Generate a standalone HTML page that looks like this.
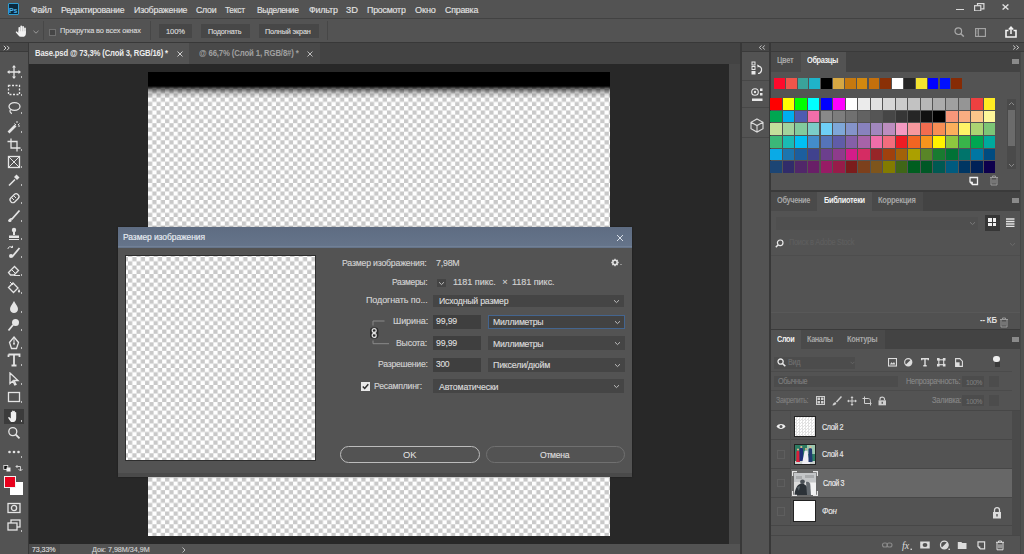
<!DOCTYPE html>
<html><head><meta charset="utf-8">
<style>
*{margin:0;padding:0;box-sizing:border-box}
html,body{width:1024px;height:554px;overflow:hidden;background:#535353;font-family:"Liberation Sans",sans-serif;color:#d6d6d6}
body{position:relative}
.a{position:absolute}
.t{position:absolute;white-space:pre;line-height:1;-webkit-text-stroke-width:0.15px}
.chk{background:repeating-conic-gradient(#c9c9c9 0 25%,#ffffff 0 50%) 0 0/8.533px 8.533px}
</style></head><body>
<div class="a" style="left:0px;top:0px;width:1024px;height:18px;background:#535353;"></div>
<div class="a" style="left:0px;top:18px;width:1024px;height:1px;background:#424242;"></div>
<div class="a" style="left:0px;top:19px;width:1024px;height:23px;background:#535353;"></div>
<div class="a" style="left:0px;top:42px;width:1024px;height:1px;background:#383838;"></div>
<div class="a" style="left:0px;top:43px;width:28px;height:511px;background:#535353;"></div>
<div class="a" style="left:0px;top:43px;width:28px;height:8px;background:#474747;"></div>
<div class="a" style="left:0px;top:51px;width:28px;height:1px;background:#3a3a3a;"></div>
<div class="a" style="left:28px;top:43px;width:1px;height:511px;background:#383838;"></div>
<div class="a" style="left:29px;top:43px;width:711px;height:21px;background:#434343;"></div>
<div class="a" style="left:29px;top:43px;width:160px;height:21px;background:#535353;"></div>
<div class="a" style="left:189px;top:43px;width:131px;height:21px;background:#494949;"></div>
<div class="a" style="left:29px;top:64px;width:700px;height:480px;background:#282828;"></div>
<div class="a" style="left:729px;top:64px;width:11px;height:480px;background:#484848;"></div>
<div class="a" style="left:29px;top:544px;width:711px;height:10px;background:#535353;"></div>
<div class="a" style="left:29px;top:544px;width:31px;height:10px;background:#4a4a4a;"></div>
<div class="a" style="left:740px;top:43px;width:2px;height:511px;background:#383838;"></div>
<div class="a" style="left:742px;top:43px;width:27px;height:511px;background:#535353;"></div>
<div class="a" style="left:742px;top:43px;width:27px;height:8px;background:#474747;"></div>
<div class="a" style="left:742px;top:51px;width:27px;height:1px;background:#3a3a3a;"></div>
<div class="a" style="left:769px;top:43px;width:2px;height:511px;background:#383838;"></div>
<div class="a" style="left:771px;top:43px;width:253px;height:511px;background:#535353;"></div>
<div class="a" style="left:771px;top:43px;width:253px;height:8px;background:#474747;"></div>
<div class="a" style="left:771px;top:51px;width:253px;height:1px;background:#3a3a3a;"></div>
<div class="a" style="left:1020px;top:52px;width:4px;height:502px;background:#505050;"></div>
<div class="a" style="left:1020px;top:52px;width:1px;height:502px;background:#474747;"></div>
<svg class="a" style="left:1012px;top:45px" width="8" height="5" viewBox="0 0 8 5"><path d="M1.2 0.5L3.4 2.5L1.2 4.5M4.5 0.5L6.7 2.5L4.5 4.5" fill="none" stroke="#dcdcdc" stroke-width="0.9"/></svg>
<svg class="a" style="left:148px;top:72px" width="462" height="464"><defs><pattern id="pc" width="8.5333" height="8.5333" patternUnits="userSpaceOnUse"><rect width="8.5333" height="8.5333" fill="#fff"/><rect x="4.2667" width="4.2667" height="4.2667" fill="#c9c9c9"/><rect y="4.2667" width="4.2667" height="4.2667" fill="#c9c9c9"/></pattern></defs><rect width="462" height="464" fill="url(#pc)"/></svg>
<div class="a" style="left:148px;top:72px;width:462px;height:26px;background:linear-gradient(#000 0,#000 14px,rgba(0,0,0,.55) 17px,rgba(0,0,0,.2) 21px,rgba(0,0,0,0) 26px)"></div>
<div class="a" style="left:118px;top:227px;width:514px;height:250px;background:#535353;box-shadow:0 0 2px rgba(0,0,0,.35)"></div>
<div class="a" style="left:118px;top:227px;width:514px;height:21px;background:linear-gradient(#5e6c82,#66758b);"></div>
<div class="a" style="left:118px;top:246px;width:514px;height:1px;background:#718096;"></div>
<div class="t" style="left:123.06px;top:233.32px;font-size:8.6px;color:#e8edf3;letter-spacing:-0.058px;transform:scaleX(0.9823);transform-origin:0 0">Размер изображения</div>
<svg class="a" style="left:616px;top:234px" width="8" height="8" viewBox="0 0 8 8"><path d="M1 1L7 7M7 1L1 7" stroke="#dfe5ec" stroke-width="0.95"/></svg>
<div class="a" style="left:125px;top:255px;width:191px;height:205.5px;background:#2e2e2e;"></div>
<svg class="a" style="left:126px;top:256px" width="189" height="203.5"><rect width="189" height="204" fill="url(#pc2)"/><defs><pattern id="pc2" width="8.5333" height="8.5333" patternUnits="userSpaceOnUse" x="2" y="1"><rect width="8.5333" height="8.5333" fill="#fff"/><rect x="4.2667" width="4.2667" height="4.2667" fill="#c9c9c9"/><rect y="4.2667" width="4.2667" height="4.2667" fill="#c9c9c9"/></pattern></defs></svg>
<div class="a" style="left:118px;top:473px;width:514px;height:4px;background:#4a4a4a;"></div>
<div class="t" style="left:342.45px;top:258.53px;font-size:9.3px;color:#d2d2d2;letter-spacing:-0.207px;transform:scaleX(0.9378);transform-origin:0 0">Размер изображения:</div>
<div class="t" style="left:435.55px;top:258.53px;font-size:9.3px;color:#d2d2d2;letter-spacing:-0.209px;transform:scaleX(0.9488);transform-origin:0 0">7,98M</div>
<svg class="a" style="left:611px;top:258px" width="12" height="9" viewBox="0 0 12 9"><circle cx="4" cy="4.5" r="2.2" fill="none" stroke="#e0e0e0" stroke-width="1.6"/><g stroke="#e0e0e0" stroke-width="1.3"><path d="M4 0.8V2M4 7V8.2M0.3 4.5H1.5M6.5 4.5H7.7M1.4 1.9L2.2 2.7M5.8 6.3L6.6 7.1M1.4 7.1L2.2 6.3M5.8 2.7L6.6 1.9"/></g><path d="M9 6L11 6L10 7Z" fill="#cfcfcf"/></svg>
<div class="t" style="left:391.66px;top:278.33px;font-size:9.3px;color:#d2d2d2;letter-spacing:-0.323px;transform:scaleX(0.9115);transform-origin:0 0">Размеры:</div>
<div class="a" style="left:437px;top:279px;width:9px;height:8px;background:#444;"></div>
<svg class="a" style="left:438px;top:281px" width="7" height="5" viewBox="0 0 7 5"><path d="M1 1.2L3.5 3.6L6 1.2" fill="none" stroke="#bdbdbd" stroke-width="1"/></svg>
<div class="t" style="left:453.24px;top:278.33px;font-size:9.3px;color:#d2d2d2;letter-spacing:-0.065px;transform:scaleX(0.9797);transform-origin:0 0">1181 пикс.</div>
<div class="t" style="left:502.13px;top:278.33px;font-size:9.3px;color:#d2d2d2;letter-spacing:0.000px">×</div>
<div class="t" style="left:512.34px;top:278.33px;font-size:9.3px;color:#d2d2d2;letter-spacing:-0.069px;transform:scaleX(0.9782);transform-origin:0 0">1181 пикс.</div>
<div class="t" style="left:366.04px;top:296.43px;font-size:9.3px;color:#d2d2d2;letter-spacing:-0.103px;transform:scaleX(0.9658);transform-origin:0 0">Подогнать по...</div>
<div class="a" style="left:433px;top:294.5px;width:191px;height:12.5px;background:#454545;"></div>
<svg class="a" style="left:613px;top:298.75px" width="7" height="5" viewBox="0 0 7 5"><path d="M1 1.2L3.5 3.6L6 1.2" fill="none" stroke="#bdbdbd" stroke-width="1"/></svg>
<div class="t" style="left:438.65px;top:297.23px;font-size:9.3px;color:#dcdcdc;letter-spacing:-0.215px;transform:scaleX(0.9385);transform-origin:0 0">Исходный размер</div>
<div class="t" style="left:392.64px;top:317.43px;font-size:9.3px;color:#d2d2d2;letter-spacing:-0.121px;transform:scaleX(0.9696);transform-origin:0 0">Ширина:</div>
<div class="a" style="left:433px;top:315px;width:48px;height:13.5px;background:#3f3f3f;"></div>
<div class="t" style="left:435.65px;top:317.43px;font-size:9.3px;color:#dcdcdc;letter-spacing:-0.201px;transform:scaleX(0.9450);transform-origin:0 0">99,99</div>
<div class="a" style="left:487.6px;top:315px;width:137px;height:14px;background:#424242;border:1px solid #44658f;"></div>
<svg class="a" style="left:613.6px;top:320.0px" width="7" height="5" viewBox="0 0 7 5"><path d="M1 1.2L3.5 3.6L6 1.2" fill="none" stroke="#bdbdbd" stroke-width="1"/></svg>
<div class="t" style="left:493.25px;top:318.23px;font-size:9.3px;color:#dcdcdc;letter-spacing:-0.258px;transform:scaleX(0.9349);transform-origin:0 0">Миллиметры</div>
<div class="t" style="left:396.35px;top:338.93px;font-size:9.3px;color:#d2d2d2;letter-spacing:-0.224px;transform:scaleX(0.9382);transform-origin:0 0">Высота:</div>
<div class="a" style="left:433px;top:336.4px;width:48px;height:14px;background:#3f3f3f;"></div>
<div class="t" style="left:435.65px;top:338.93px;font-size:9.3px;color:#dcdcdc;letter-spacing:-0.201px;transform:scaleX(0.9450);transform-origin:0 0">99,99</div>
<div class="a" style="left:487.6px;top:336.4px;width:137px;height:14px;background:#454545;"></div>
<svg class="a" style="left:613.6px;top:341.4px" width="7" height="5" viewBox="0 0 7 5"><path d="M1 1.2L3.5 3.6L6 1.2" fill="none" stroke="#bdbdbd" stroke-width="1"/></svg>
<div class="t" style="left:493.25px;top:339.73px;font-size:9.3px;color:#dcdcdc;letter-spacing:-0.258px;transform:scaleX(0.9349);transform-origin:0 0">Миллиметры</div>
<div class="t" style="left:377.65px;top:360.43px;font-size:9.3px;color:#d2d2d2;letter-spacing:-0.253px;transform:scaleX(0.9287);transform-origin:0 0">Разрешение:</div>
<div class="a" style="left:433px;top:358px;width:48px;height:14px;background:#3f3f3f;"></div>
<div class="t" style="left:435.66px;top:360.43px;font-size:9.3px;color:#dcdcdc;letter-spacing:-0.392px;transform:scaleX(0.9171);transform-origin:0 0">300</div>
<div class="a" style="left:487.6px;top:358px;width:137px;height:14px;background:#454545;"></div>
<svg class="a" style="left:613.6px;top:363.0px" width="7" height="5" viewBox="0 0 7 5"><path d="M1 1.2L3.5 3.6L6 1.2" fill="none" stroke="#bdbdbd" stroke-width="1"/></svg>
<div class="t" style="left:493.25px;top:361.23px;font-size:9.3px;color:#dcdcdc;letter-spacing:-0.200px;transform:scaleX(0.9451);transform-origin:0 0">Пиксели/дюйм</div>
<svg class="a" style="left:368px;top:318px" width="24" height="30" viewBox="0 0 24 30"><path d="M16.5 3H5V7.5M5 22.5V25.7H21" fill="none" stroke="#8a8a8a" stroke-width="1"/><rect x="2" y="9.5" width="8.4" height="11" rx="3" fill="#2c2c2c"/><circle cx="6.2" cy="12.6" r="2" fill="none" stroke="#e2e2e2" stroke-width="1.2"/><circle cx="6.2" cy="17.4" r="2" fill="none" stroke="#e2e2e2" stroke-width="1.2"/><path d="M6.2 13.5V16.5" stroke="#e2e2e2" stroke-width="1"/></svg>
<div class="a" style="left:361px;top:382px;width:9px;height:9px;background:#e8e8e8;"></div>
<svg class="a" style="left:361px;top:382px" width="9" height="9" viewBox="0 0 9 9"><path d="M1.8 4.5L3.7 6.5L7.3 2.3" fill="none" stroke="#2e2e2e" stroke-width="1.5"/></svg>
<div class="t" style="left:374.45px;top:381.93px;font-size:9.3px;color:#d2d2d2;letter-spacing:-0.231px;transform:scaleX(0.9321);transform-origin:0 0">Ресамплинг:</div>
<div class="a" style="left:433px;top:379.4px;width:191px;height:13.6px;background:#454545;"></div>
<svg class="a" style="left:613px;top:384.2px" width="7" height="5" viewBox="0 0 7 5"><path d="M1 1.2L3.5 3.6L6 1.2" fill="none" stroke="#bdbdbd" stroke-width="1"/></svg>
<div class="t" style="left:438.65px;top:382.73px;font-size:9.3px;color:#dcdcdc;letter-spacing:-0.181px;transform:scaleX(0.9476);transform-origin:0 0">Автоматически</div>
<div class="a" style="left:340px;top:445.5px;width:139.5px;height:17.5px;border:1.2px solid #bcbcbc;border-radius:9px"></div>
<div class="t" style="left:402.63px;top:451.13px;font-size:9.3px;color:#e6e6e6;letter-spacing:0.048px;transform:scaleX(1.0056);transform-origin:0 0;-webkit-text-stroke-width:0">OK</div>
<div class="a" style="left:486px;top:445.5px;width:139px;height:17.5px;border:1px solid #707070;border-radius:9px"></div>
<div class="t" style="left:540.16px;top:451.13px;font-size:9.3px;color:#dedede;letter-spacing:-0.304px;transform:scaleX(0.9271);transform-origin:0 0">Отмена</div>
<div class="a" style="left:7.6px;top:3px;width:11.6px;height:12.2px;background:#0a2a3e;border:1px solid #2f9ccf;border-radius:1px"></div>
<div class="t" style="left:9.12px;top:6.51px;font-size:7.2px;color:#4bb4f0;letter-spacing:-0.146px;transform:scaleX(0.9734);transform-origin:0 0;font-weight:700;-webkit-text-stroke-width:0">Ps</div>
<div class="t" style="left:31.25px;top:6.03px;font-size:9.3px;color:#e2e2e2;letter-spacing:-0.254px;transform:scaleX(0.9470);transform-origin:0 0">Файл</div>
<div class="t" style="left:61.05px;top:6.03px;font-size:9.3px;color:#e2e2e2;letter-spacing:-0.224px;transform:scaleX(0.9352);transform-origin:0 0">Редактирование</div>
<div class="t" style="left:133.95px;top:6.03px;font-size:9.3px;color:#e2e2e2;letter-spacing:-0.201px;transform:scaleX(0.9462);transform-origin:0 0">Изображение</div>
<div class="t" style="left:196.15px;top:6.03px;font-size:9.3px;color:#e2e2e2;letter-spacing:-0.274px;transform:scaleX(0.9420);transform-origin:0 0">Слои</div>
<div class="t" style="left:225.16px;top:6.03px;font-size:9.3px;color:#e2e2e2;letter-spacing:-0.335px;transform:scaleX(0.9066);transform-origin:0 0">Текст</div>
<div class="t" style="left:256.66px;top:6.03px;font-size:9.3px;color:#e2e2e2;letter-spacing:-0.365px;transform:scaleX(0.9042);transform-origin:0 0">Выделение</div>
<div class="t" style="left:308.65px;top:6.03px;font-size:9.3px;color:#e2e2e2;letter-spacing:-0.190px;transform:scaleX(0.9520);transform-origin:0 0">Фильтр</div>
<div class="t" style="left:345.62px;top:6.03px;font-size:9.3px;color:#e2e2e2;letter-spacing:0.067px;transform:scaleX(1.0088);transform-origin:0 0">3D</div>
<div class="t" style="left:367.05px;top:6.03px;font-size:9.3px;color:#e2e2e2;letter-spacing:-0.206px;transform:scaleX(0.9465);transform-origin:0 0">Просмотр</div>
<div class="t" style="left:415.23px;top:6.03px;font-size:9.3px;color:#e2e2e2;letter-spacing:-0.087px;transform:scaleX(0.9812);transform-origin:0 0">Окно</div>
<div class="t" style="left:445.05px;top:6.03px;font-size:9.3px;color:#e2e2e2;letter-spacing:-0.208px;transform:scaleX(0.9459);transform-origin:0 0">Справка</div>
<div class="a" style="left:956px;top:8.5px;width:8px;height:1.6px;background:#d8d8d8;"></div>
<svg class="a" style="left:974px;top:2.5px" width="10.5" height="8.5" viewBox="0 0 10.5 8.5"><path d="M3.5 2.5V0.6H9.9V5.8H7.2" fill="none" stroke="#dadada" stroke-width="1.2"/><rect x="0.6" y="2.7" width="6.2" height="5.2" fill="none" stroke="#dadada" stroke-width="1.2"/></svg>
<svg class="a" style="left:1001.5px;top:3.8px" width="7" height="6" viewBox="0 0 7 6"><path d="M0.6 0.4L6.4 5.6M6.4 0.4L0.6 5.6" stroke="#dedede" stroke-width="1.3"/></svg>
<svg class="a" style="left:15.3px;top:24.6px" width="12" height="12" viewBox="0 0 12 12"><g stroke="#f2f2f2" stroke-width="1.7" stroke-linecap="round"><path d="M4.3 7V2.8M6.2 6.5V1.3M8.1 6.5V1.8M10 7V3.3"/></g><path d="M3.4 6.2H10.9V8.4C10.9 10.6 9.6 11.8 7.6 11.8H5.8C4.8 11.8 4.1 11.4 3.5 10.6L0.9 7.4C0.5 6.8 1.2 6 1.9 6.6L3.4 7.9Z" fill="#f2f2f2"/></svg>
<svg class="a" style="left:33px;top:30px" width="6" height="4" viewBox="0 0 6 4"><path d="M0.5 0.8L3 3.2L5.5 0.8" fill="none" stroke="#9a9a9a" stroke-width="1"/></svg>
<div class="a" style="left:43px;top:21px;width:1px;height:19px;background:#474747;"></div>
<div class="a" style="left:49.3px;top:28.5px;width:7px;height:7px;border:1px solid #707070;background:#454545"></div>
<div class="t" style="left:59.51px;top:27.48px;font-size:7.7px;color:#d8d8d8;letter-spacing:-0.115px;transform:scaleX(0.9550);transform-origin:0 0">Прокрутка во всех окнах</div>
<div class="a" style="left:150px;top:21px;width:1px;height:19px;background:#474747;"></div>
<div class="a" style="left:159.3px;top:23.6px;width:32.4px;height:14.4px;background:#474747;"></div>
<div class="t" style="left:165.70px;top:27.78px;font-size:7.7px;color:#dadada;letter-spacing:-0.081px;transform:scaleX(0.9807);transform-origin:0 0">100%</div>
<div class="a" style="left:201px;top:23.6px;width:49.2px;height:14.4px;background:#474747;"></div>
<div class="t" style="left:208.01px;top:27.78px;font-size:7.7px;color:#dadada;letter-spacing:-0.181px;transform:scaleX(0.9383);transform-origin:0 0">Подогнать</div>
<div class="a" style="left:258.5px;top:23.6px;width:60.7px;height:14.4px;background:#474747;"></div>
<div class="t" style="left:265.31px;top:27.78px;font-size:7.7px;color:#dadada;letter-spacing:-0.165px;transform:scaleX(0.9433);transform-origin:0 0">Полный экран</div>
<div class="a" style="left:326.5px;top:21px;width:1px;height:19px;background:#474747;"></div>
<svg class="a" style="left:954px;top:27px" width="12" height="10" viewBox="0 0 12 10"><circle cx="4.3" cy="4.2" r="3.3" fill="none" stroke="#a8a8a8" stroke-width="1.2"/><path d="M6.8 6.7L9.8 9.6" stroke="#a8a8a8" stroke-width="1.4"/></svg>
<svg class="a" style="left:975px;top:28px" width="11" height="9" viewBox="0 0 11 9"><rect x="0.6" y="0.6" width="9.8" height="7.8" fill="none" stroke="#a8a8a8" stroke-width="1.1"/><path d="M3.3 1V8" stroke="#a8a8a8" stroke-width="1"/><path d="M1.5 3H2.5M1.5 5H2.5" stroke="#a8a8a8" stroke-width="0.8"/></svg>
<svg class="a" style="left:1005px;top:25.5px" width="12" height="12" viewBox="0 0 12 12"><path d="M3.5 4.5H1V11H11V4.5H8.5" fill="none" stroke="#f4f4f4" stroke-width="1.6"/><path d="M6 8V1.5M3.8 3.5L6 1.2L8.2 3.5" fill="none" stroke="#f4f4f4" stroke-width="1.5"/></svg>
<svg class="a" style="left:3px;top:45px" width="8" height="6" viewBox="0 0 8 6"><path d="M0.8 0.8L3 3L0.8 5.2M4 0.8L6.2 3L4 5.2" fill="none" stroke="#cfcfcf" stroke-width="1"/></svg>
<svg class="a" style="left:7px;top:65px" width="16" height="14" viewBox="0 0 16 14"><path d="M7 1V13M1 7H13" fill="none" stroke="#e4e4e4" stroke-width="1.3"/><path d="M7 0L9 2.5H5ZM7 14L9 11.5H5ZM0 7L2.5 5V9ZM14 7L11.5 5V9Z" fill="#e4e4e4"/></svg>
<div class="a" style="left:20.5px;top:76px;width:1.5px;height:1.5px;background:#bdbdbd;"></div>
<svg class="a" style="left:7px;top:83px" width="16" height="14" viewBox="0 0 16 14"><rect x="1.5" y="2.5" width="11" height="9" fill="none" stroke="#e4e4e4" stroke-width="1.3" stroke-dasharray="2 1.5"/></svg>
<div class="a" style="left:20.5px;top:94px;width:1.5px;height:1.5px;background:#bdbdbd;"></div>
<svg class="a" style="left:7px;top:101px" width="16" height="14" viewBox="0 0 16 14"><ellipse cx="7.5" cy="5.5" rx="5.5" ry="3.8" fill="none" stroke="#e4e4e4" stroke-width="1.3"/><path d="M3.5 8.5C2.5 10 3 12 5 12.5" fill="none" stroke="#e4e4e4" stroke-width="1.3"/></svg>
<div class="a" style="left:20.5px;top:112px;width:1.5px;height:1.5px;background:#bdbdbd;"></div>
<svg class="a" style="left:7px;top:120px" width="16" height="14" viewBox="0 0 16 14"><path d="M1.5 12.5L8.5 5.5" stroke="#e4e4e4" stroke-width="2.6"/><path d="M10 1V3M12.5 3.5L11 5M13 6H11M7.5 3.5L9 5" stroke="#e4e4e4" stroke-width="1"/></svg>
<div class="a" style="left:20.5px;top:131px;width:1.5px;height:1.5px;background:#bdbdbd;"></div>
<svg class="a" style="left:7px;top:138px" width="16" height="14" viewBox="0 0 16 14"><path d="M4 0.5V10H13.5M0.5 3.5H10V13.5" fill="none" stroke="#e4e4e4" stroke-width="1.3"/></svg>
<div class="a" style="left:20.5px;top:149px;width:1.5px;height:1.5px;background:#bdbdbd;"></div>
<svg class="a" style="left:7px;top:155px" width="16" height="14" viewBox="0 0 16 14"><rect x="1.5" y="1.5" width="11" height="11" fill="none" stroke="#e4e4e4" stroke-width="1.3"/><path d="M1.5 1.5L12.5 12.5M12.5 1.5L1.5 12.5" stroke="#e4e4e4" stroke-width="1"/></svg>
<div class="a" style="left:20.5px;top:166px;width:1.5px;height:1.5px;background:#bdbdbd;"></div>
<svg class="a" style="left:7px;top:173px" width="16" height="14" viewBox="0 0 16 14"><path d="M2 12.5L8 6.5" stroke="#e4e4e4" stroke-width="1.6"/><path d="M9.5 1.5L12.5 4.5L10 7L7 4Z" fill="#e4e4e4"/></svg>
<div class="a" style="left:20.5px;top:184px;width:1.5px;height:1.5px;background:#bdbdbd;"></div>
<svg class="a" style="left:7px;top:191px" width="16" height="14" viewBox="0 0 16 14"><rect x="2.5" y="4.5" width="10" height="5.5" rx="2.5" transform="rotate(-45 7.5 7.25)" fill="none" stroke="#e4e4e4" stroke-width="1.3"/><path d="M5 7L7 9M7 5L9 7" stroke="#e4e4e4" stroke-width="1"/></svg>
<div class="a" style="left:20.5px;top:202px;width:1.5px;height:1.5px;background:#bdbdbd;"></div>
<svg class="a" style="left:7px;top:209px" width="16" height="14" viewBox="0 0 16 14"><path d="M2 12.5C2.5 10.5 3.5 9.5 5 10L12.5 1.5" stroke="#e4e4e4" stroke-width="1.8" fill="none"/><circle cx="3" cy="11.5" r="1.6" fill="#e4e4e4"/></svg>
<div class="a" style="left:20.5px;top:220px;width:1.5px;height:1.5px;background:#bdbdbd;"></div>
<svg class="a" style="left:7px;top:227px" width="16" height="14" viewBox="0 0 16 14"><circle cx="7" cy="3" r="2.2" fill="#e4e4e4"/><path d="M6 5H8V8H6Z" fill="#e4e4e4"/><path d="M2 8.5H12V11H2Z" fill="#e4e4e4"/><path d="M2 12.5H12" stroke="#e4e4e4" stroke-width="1"/></svg>
<div class="a" style="left:20.5px;top:238px;width:1.5px;height:1.5px;background:#bdbdbd;"></div>
<svg class="a" style="left:7px;top:245px" width="16" height="14" viewBox="0 0 16 14"><path d="M5 12L12.5 3" stroke="#e4e4e4" stroke-width="1.8"/><circle cx="4" cy="11" r="2" fill="#e4e4e4"/><path d="M1 4C1 1.5 4 1 5.5 2.5M5.5 2.5V0.8M5.5 2.5H3.8" stroke="#e4e4e4" stroke-width="1" fill="none"/></svg>
<div class="a" style="left:20.5px;top:256px;width:1.5px;height:1.5px;background:#bdbdbd;"></div>
<svg class="a" style="left:7px;top:263px" width="16" height="14" viewBox="0 0 16 14"><path d="M1.5 9.5L7.5 3.5L11.5 7.5L7 12H3.5Z" fill="none" stroke="#e4e4e4" stroke-width="1.3"/><path d="M4.5 6.5L8.5 10.5" stroke="#e4e4e4" stroke-width="1"/><path d="M7 12.5H13" stroke="#e4e4e4" stroke-width="1"/></svg>
<div class="a" style="left:20.5px;top:274px;width:1.5px;height:1.5px;background:#bdbdbd;"></div>
<svg class="a" style="left:7px;top:281px" width="16" height="14" viewBox="0 0 16 14"><path d="M1.5 6.5L6 2L11 7L6.5 11.5Z" fill="none" stroke="#e4e4e4" stroke-width="1.3"/><path d="M12 8C13.5 10 13.5 11.5 12 11.5C10.5 11.5 10.5 10 12 8Z" fill="#e4e4e4"/><path d="M3 1L6 4" stroke="#e4e4e4" stroke-width="1"/></svg>
<div class="a" style="left:20.5px;top:292px;width:1.5px;height:1.5px;background:#bdbdbd;"></div>
<svg class="a" style="left:7px;top:300px" width="16" height="14" viewBox="0 0 16 14"><path d="M7 1C9 4.5 11 6.5 11 9C11 11.5 9 13 7 13C5 13 3 11.5 3 9C3 6.5 5 4.5 7 1Z" fill="#e4e4e4"/></svg>
<div class="a" style="left:20.5px;top:311px;width:1.5px;height:1.5px;background:#bdbdbd;"></div>
<svg class="a" style="left:7px;top:318px" width="16" height="14" viewBox="0 0 16 14"><circle cx="8.5" cy="4.5" r="3.5" fill="#e4e4e4"/><path d="M6 7L1.5 12.5" stroke="#e4e4e4" stroke-width="1.8"/></svg>
<div class="a" style="left:20.5px;top:329px;width:1.5px;height:1.5px;background:#bdbdbd;"></div>
<svg class="a" style="left:7px;top:336px" width="16" height="14" viewBox="0 0 16 14"><path d="M7 1L11.5 6.5L9.5 12.5H4.5L2.5 6.5Z" fill="none" stroke="#e4e4e4" stroke-width="1.3"/><path d="M7 1V7" stroke="#e4e4e4" stroke-width="1"/><circle cx="7" cy="7.8" r="1" fill="#e4e4e4"/></svg>
<div class="a" style="left:20.5px;top:347px;width:1.5px;height:1.5px;background:#bdbdbd;"></div>
<svg class="a" style="left:7px;top:353px" width="16" height="14" viewBox="0 0 16 14"><path d="M1.5 1.5H12.5V4M1.5 1.5V4M7 1.5V12.5M4.5 12.5H9.5" stroke="#e4e4e4" stroke-width="1.8" fill="none"/></svg>
<div class="a" style="left:20.5px;top:364px;width:1.5px;height:1.5px;background:#bdbdbd;"></div>
<svg class="a" style="left:7px;top:372px" width="16" height="14" viewBox="0 0 16 14"><path d="M3 1L11 8.5H7L9 12.5L7.8 13L5.8 9L3 11.5Z" fill="none" stroke="#e4e4e4" stroke-width="1.3"/></svg>
<div class="a" style="left:20.5px;top:383px;width:1.5px;height:1.5px;background:#bdbdbd;"></div>
<svg class="a" style="left:7px;top:390px" width="16" height="14" viewBox="0 0 16 14"><rect x="1.5" y="2.5" width="11" height="9" fill="none" stroke="#e4e4e4" stroke-width="1.3"/></svg>
<div class="a" style="left:20.5px;top:401px;width:1.5px;height:1.5px;background:#bdbdbd;"></div>
<div class="a" style="left:4px;top:409px;width:20px;height:14.5px;background:#3b3b3b;"></div>
<svg class="a" style="left:7px;top:409px" width="16" height="14" viewBox="0 0 16 14"><path d="M4 13C2.8 11.5 1.3 9.6 1.2 8.6C1.1 7.9 2 7.7 2.6 8.4L3.8 9.6V3.5C3.8 2.6 5.1 2.6 5.1 3.5V6.8V2.2C5.1 1.2 6.5 1.2 6.5 2.2V6.8V2.5C6.5 1.6 7.9 1.6 7.9 2.5V7V3.6C7.9 2.7 9.2 2.7 9.2 3.6V9C9.2 11.4 7.9 13 6.4 13Z" fill="#f0f0f0"/></svg>
<div class="a" style="left:20.5px;top:420px;width:1.5px;height:1.5px;background:#bdbdbd;"></div>
<svg class="a" style="left:7px;top:426px" width="16" height="14" viewBox="0 0 16 14"><circle cx="5.8" cy="5.6" r="4" fill="none" stroke="#e4e4e4" stroke-width="1.3"/><path d="M8.8 8.6L12.5 12.3" stroke="#e4e4e4" stroke-width="1.8"/></svg>
<svg class="a" style="left:7px;top:445px" width="16" height="14" viewBox="0 0 16 14"><circle cx="2.5" cy="7" r="1.3" fill="#e4e4e4"/><circle cx="7" cy="7" r="1.3" fill="#e4e4e4"/><circle cx="11.5" cy="7" r="1.3" fill="#e4e4e4"/></svg>
<div class="a" style="left:20.5px;top:456px;width:1.5px;height:1.5px;background:#bdbdbd;"></div>
<svg class="a" style="left:3px;top:465px" width="20" height="7" viewBox="0 0 20 7"><rect x="0.8" y="0.5" width="4" height="4" fill="#111" stroke="#eee" stroke-width="0.8"/><rect x="3.5" y="2.5" width="4" height="4" fill="#eee"/><path d="M13 1.5H17.5V5.5M15.5 4L17.5 6L19.5 4M14.5 0L13 1.5L14.5 3" fill="none" stroke="#ddd" stroke-width="0.9"/></svg>
<div class="a" style="left:10px;top:482px;width:13px;height:12.5px;background:#ffffff;"></div>
<div class="a" style="left:3.8px;top:475.8px;width:12.6px;height:12.4px;background:#e8001c;border:1px solid #f0f0f0"></div>
<svg class="a" style="left:7px;top:501.5px" width="16" height="14" viewBox="0 0 16 14"><rect x="1" y="1.5" width="12" height="9" fill="none" stroke="#e4e4e4" stroke-width="1.3"/><circle cx="7" cy="6" r="2.6" fill="none" stroke="#e4e4e4" stroke-width="1.3"/></svg>
<svg class="a" style="left:7px;top:519px" width="16" height="14" viewBox="0 0 16 14"><rect x="4" y="1" width="9" height="7" fill="none" stroke="#e4e4e4" stroke-width="1.3"/><rect x="1" y="4" width="9" height="7" fill="#535353" stroke="#e4e4e4" stroke-width="1.3"/></svg>
<div class="a" style="left:20.5px;top:530px;width:1.5px;height:1.5px;background:#bdbdbd;"></div>
<div class="t" style="left:35.09px;top:50.46px;font-size:8.2px;color:#ececec;letter-spacing:-0.168px;transform:scaleX(0.9394);transform-origin:0 0;font-weight:700;-webkit-text-stroke-width:0">Base.psd @ 73,3% (Слой 3, RGB/16) *</div>
<svg class="a" style="left:177px;top:51px" width="6" height="6" viewBox="0 0 6 6"><path d="M0.5 0.5L5.5 5.5M5.5 0.5L0.5 5.5" stroke="#cfcfcf" stroke-width="1"/></svg>
<div class="t" style="left:199.19px;top:50.46px;font-size:8.2px;color:#a0a0a0;letter-spacing:-0.142px;transform:scaleX(0.9492);transform-origin:0 0;font-weight:700;-webkit-text-stroke-width:0">@ 66,7% (Слой 1, RGB/8#) *</div>
<svg class="a" style="left:307px;top:51px" width="6" height="6" viewBox="0 0 6 6"><path d="M0.5 0.5L5.5 5.5M5.5 0.5L0.5 5.5" stroke="#bdbdbd" stroke-width="1"/></svg>
<div class="t" style="left:31.91px;top:546.04px;font-size:7.4px;color:#dcdcdc;letter-spacing:-0.115px;transform:scaleX(0.9642);transform-origin:0 0">73,33%</div>
<div class="t" style="left:91.71px;top:546.04px;font-size:7.4px;color:#d0d0d0;letter-spacing:-0.052px;transform:scaleX(0.9801);transform-origin:0 0">Док: 7,98M/34,9M</div>
<svg class="a" style="left:181.5px;top:546.5px" width="4" height="6" viewBox="0 0 4 6"><path d="M0.5 0.5L3 3L0.5 5.5" fill="none" stroke="#bdbdbd" stroke-width="1"/></svg>
<svg class="a" style="left:758px;top:45px" width="8" height="5" viewBox="0 0 8 5"><path d="M3.5 0.5L1.3 2.5L3.5 4.5M6.8 0.5L4.6 2.5L6.8 4.5" fill="none" stroke="#cfcfcf" stroke-width="0.9"/></svg>
<div class="a" style="left:742px;top:80px;width:27px;height:1px;background:#474747;"></div>
<div class="a" style="left:742px;top:107px;width:27px;height:1px;background:#474747;"></div>
<div class="a" style="left:742px;top:137px;width:27px;height:1px;background:#474747;"></div>
<svg class="a" style="left:751px;top:61px" width="12" height="14" viewBox="0 0 12 14"><rect x="1" y="1" width="3" height="3" fill="none" stroke="#e8e8e8" stroke-width="1"/><rect x="1" y="5.5" width="3" height="3" fill="none" stroke="#e8e8e8" stroke-width="1"/><rect x="0.5" y="10" width="4" height="3.5" fill="#e8e8e8"/><path d="M7 5.5C9.5 5 11 7 10.5 9.5C10 11.5 8.5 12.5 7 12.5" fill="none" stroke="#e8e8e8" stroke-width="1.2"/><path d="M6 3.5L8.3 4.5L6.8 6.8Z" fill="#e8e8e8"/></svg>
<svg class="a" style="left:751px;top:87px" width="12" height="16" viewBox="0 0 12 16"><circle cx="4" cy="5" r="3.3" fill="none" stroke="#e8e8e8" stroke-width="1.1"/><circle cx="4" cy="5" r="1.2" fill="#e8e8e8"/><rect x="9" y="1.5" width="2.5" height="2.5" fill="#e8e8e8"/><rect x="9" y="6" width="2.5" height="2.5" fill="#e8e8e8"/><rect x="1" y="11.5" width="10.5" height="2.5" fill="#e8e8e8"/></svg>
<svg class="a" style="left:750px;top:118px" width="14" height="15" viewBox="0 0 14 15"><path d="M7 1L13 4.3V10.7L7 14L1 10.7V4.3Z M1 4.3L7 7.6L13 4.3M7 7.6V14" fill="none" stroke="#dcdcdc" stroke-width="1.1"/></svg>
<div class="a" style="left:771px;top:52px;width:249px;height:20px;background:#434343;"></div>
<div class="a" style="left:771px;top:52px;width:30px;height:20px;background:#4a4a4a;"></div>
<div class="a" style="left:801px;top:52px;width:44.6px;height:20px;background:#535353;"></div>
<div class="t" style="left:776.50px;top:56.66px;font-size:8.2px;color:#a6a6a6;letter-spacing:-0.358px;transform:scaleX(0.9096);transform-origin:0 0;font-weight:700;-webkit-text-stroke-width:0">Цвет</div>
<div class="t" style="left:807.41px;top:56.66px;font-size:8.2px;color:#f2f2f2;letter-spacing:-0.386px;transform:scaleX(0.8988);transform-origin:0 0;font-weight:700;-webkit-text-stroke-width:0">Образцы</div>
<div class="a" style="left:1012px;top:58.5px;width:7.3px;height:5.5px;background:#8a8a8a"></div>
<div class="a" style="left:774.0px;top:77.9px;width:10.7px;height:10.9px;background:#ff0a2c;"></div>
<div class="a" style="left:785.83px;top:77.9px;width:10.7px;height:10.9px;background:#ef554a;"></div>
<div class="a" style="left:797.66px;top:77.9px;width:10.7px;height:10.9px;background:#3aa39a;"></div>
<div class="a" style="left:809.49px;top:77.9px;width:10.7px;height:10.9px;background:#1fb3c9;"></div>
<div class="a" style="left:821.32px;top:77.9px;width:10.7px;height:10.9px;background:#000000;"></div>
<div class="a" style="left:833.15px;top:77.9px;width:10.7px;height:10.9px;background:#d6a743;"></div>
<div class="a" style="left:844.98px;top:77.9px;width:10.7px;height:10.9px;background:#c6790f;"></div>
<div class="a" style="left:856.81px;top:77.9px;width:10.7px;height:10.9px;background:#d2880f;"></div>
<div class="a" style="left:868.64px;top:77.9px;width:10.7px;height:10.9px;background:#c5700c;"></div>
<div class="a" style="left:880.47px;top:77.9px;width:10.7px;height:10.9px;background:#8a3006;"></div>
<div class="a" style="left:892.3px;top:77.9px;width:10.7px;height:10.9px;background:#ffffff;"></div>
<div class="a" style="left:904.13px;top:77.9px;width:10.7px;height:10.9px;background:#262626;"></div>
<div class="a" style="left:915.96px;top:77.9px;width:10.7px;height:10.9px;background:#f3e230;"></div>
<div class="a" style="left:927.79px;top:77.9px;width:10.7px;height:10.9px;background:#0000ff;"></div>
<div class="a" style="left:939.62px;top:77.9px;width:10.7px;height:10.9px;background:#0010ff;"></div>
<div class="a" style="left:951.45px;top:77.9px;width:10.7px;height:10.9px;background:#862b05;"></div>
<div class="a" style="left:770.3px;top:98.3px;width:11.5px;height:11.6px;background:#FF0000;"></div>
<div class="a" style="left:782.85px;top:98.3px;width:11.5px;height:11.6px;background:#FFFF00;"></div>
<div class="a" style="left:795.4px;top:98.3px;width:11.5px;height:11.6px;background:#00FF00;"></div>
<div class="a" style="left:807.95px;top:98.3px;width:11.5px;height:11.6px;background:#00FFFF;"></div>
<div class="a" style="left:820.5px;top:98.3px;width:11.5px;height:11.6px;background:#0000FF;"></div>
<div class="a" style="left:833.05px;top:98.3px;width:11.5px;height:11.6px;background:#FF00FF;"></div>
<div class="a" style="left:845.6px;top:98.3px;width:11.5px;height:11.6px;background:#FFFFFF;"></div>
<div class="a" style="left:858.15px;top:98.3px;width:11.5px;height:11.6px;background:#EBEBEB;"></div>
<div class="a" style="left:870.7px;top:98.3px;width:11.5px;height:11.6px;background:#E1E1E1;"></div>
<div class="a" style="left:883.25px;top:98.3px;width:11.5px;height:11.6px;background:#D7D7D7;"></div>
<div class="a" style="left:895.8px;top:98.3px;width:11.5px;height:11.6px;background:#CCCCCC;"></div>
<div class="a" style="left:908.35px;top:98.3px;width:11.5px;height:11.6px;background:#C2C2C2;"></div>
<div class="a" style="left:920.9px;top:98.3px;width:11.5px;height:11.6px;background:#B7B7B7;"></div>
<div class="a" style="left:933.45px;top:98.3px;width:11.5px;height:11.6px;background:#ACACAC;"></div>
<div class="a" style="left:946.0px;top:98.3px;width:11.5px;height:11.6px;background:#A0A0A0;"></div>
<div class="a" style="left:958.55px;top:98.3px;width:11.5px;height:11.6px;background:#959595;"></div>
<div class="a" style="left:971.1px;top:98.3px;width:11.5px;height:11.6px;background:#ED4040;"></div>
<div class="a" style="left:983.65px;top:98.3px;width:11.5px;height:11.6px;background:#FFEC22;"></div>
<div class="a" style="left:770.3px;top:110.85px;width:11.5px;height:11.6px;background:#00A651;"></div>
<div class="a" style="left:782.85px;top:110.85px;width:11.5px;height:11.6px;background:#00AEEF;"></div>
<div class="a" style="left:795.4px;top:110.85px;width:11.5px;height:11.6px;background:#4E5BB0;"></div>
<div class="a" style="left:807.95px;top:110.85px;width:11.5px;height:11.6px;background:#F06EA9;"></div>
<div class="a" style="left:820.5px;top:110.85px;width:11.5px;height:11.6px;background:#898989;"></div>
<div class="a" style="left:833.05px;top:110.85px;width:11.5px;height:11.6px;background:#7D7D7D;"></div>
<div class="a" style="left:845.6px;top:110.85px;width:11.5px;height:11.6px;background:#707070;"></div>
<div class="a" style="left:858.15px;top:110.85px;width:11.5px;height:11.6px;background:#626262;"></div>
<div class="a" style="left:870.7px;top:110.85px;width:11.5px;height:11.6px;background:#555555;"></div>
<div class="a" style="left:883.25px;top:110.85px;width:11.5px;height:11.6px;background:#464646;"></div>
<div class="a" style="left:895.8px;top:110.85px;width:11.5px;height:11.6px;background:#363636;"></div>
<div class="a" style="left:908.35px;top:110.85px;width:11.5px;height:11.6px;background:#262626;"></div>
<div class="a" style="left:920.9px;top:110.85px;width:11.5px;height:11.6px;background:#111111;"></div>
<div class="a" style="left:933.45px;top:110.85px;width:11.5px;height:11.6px;background:#000000;"></div>
<div class="a" style="left:946.0px;top:110.85px;width:11.5px;height:11.6px;background:#F7977A;"></div>
<div class="a" style="left:958.55px;top:110.85px;width:11.5px;height:11.6px;background:#F9AD81;"></div>
<div class="a" style="left:971.1px;top:110.85px;width:11.5px;height:11.6px;background:#FDC68A;"></div>
<div class="a" style="left:983.65px;top:110.85px;width:11.5px;height:11.6px;background:#FFF79A;"></div>
<div class="a" style="left:770.3px;top:123.4px;width:11.5px;height:11.6px;background:#C4DF9B;"></div>
<div class="a" style="left:782.85px;top:123.4px;width:11.5px;height:11.6px;background:#A2D39C;"></div>
<div class="a" style="left:795.4px;top:123.4px;width:11.5px;height:11.6px;background:#82CA9D;"></div>
<div class="a" style="left:807.95px;top:123.4px;width:11.5px;height:11.6px;background:#7BCDC8;"></div>
<div class="a" style="left:820.5px;top:123.4px;width:11.5px;height:11.6px;background:#6ECFF6;"></div>
<div class="a" style="left:833.05px;top:123.4px;width:11.5px;height:11.6px;background:#7EA7D8;"></div>
<div class="a" style="left:845.6px;top:123.4px;width:11.5px;height:11.6px;background:#8493CA;"></div>
<div class="a" style="left:858.15px;top:123.4px;width:11.5px;height:11.6px;background:#8882BE;"></div>
<div class="a" style="left:870.7px;top:123.4px;width:11.5px;height:11.6px;background:#A187BE;"></div>
<div class="a" style="left:883.25px;top:123.4px;width:11.5px;height:11.6px;background:#BC8DBF;"></div>
<div class="a" style="left:895.8px;top:123.4px;width:11.5px;height:11.6px;background:#F49AC2;"></div>
<div class="a" style="left:908.35px;top:123.4px;width:11.5px;height:11.6px;background:#F6989D;"></div>
<div class="a" style="left:920.9px;top:123.4px;width:11.5px;height:11.6px;background:#F26C4F;"></div>
<div class="a" style="left:933.45px;top:123.4px;width:11.5px;height:11.6px;background:#F68E55;"></div>
<div class="a" style="left:946.0px;top:123.4px;width:11.5px;height:11.6px;background:#FBAF5C;"></div>
<div class="a" style="left:958.55px;top:123.4px;width:11.5px;height:11.6px;background:#FFF467;"></div>
<div class="a" style="left:971.1px;top:123.4px;width:11.5px;height:11.6px;background:#ACD372;"></div>
<div class="a" style="left:983.65px;top:123.4px;width:11.5px;height:11.6px;background:#7CC576;"></div>
<div class="a" style="left:770.3px;top:135.95px;width:11.5px;height:11.6px;background:#3BB878;"></div>
<div class="a" style="left:782.85px;top:135.95px;width:11.5px;height:11.6px;background:#1ABBB4;"></div>
<div class="a" style="left:795.4px;top:135.95px;width:11.5px;height:11.6px;background:#00BFF3;"></div>
<div class="a" style="left:807.95px;top:135.95px;width:11.5px;height:11.6px;background:#438CCA;"></div>
<div class="a" style="left:820.5px;top:135.95px;width:11.5px;height:11.6px;background:#5574B9;"></div>
<div class="a" style="left:833.05px;top:135.95px;width:11.5px;height:11.6px;background:#605CA8;"></div>
<div class="a" style="left:845.6px;top:135.95px;width:11.5px;height:11.6px;background:#855FA8;"></div>
<div class="a" style="left:858.15px;top:135.95px;width:11.5px;height:11.6px;background:#A763A8;"></div>
<div class="a" style="left:870.7px;top:135.95px;width:11.5px;height:11.6px;background:#F06EA9;"></div>
<div class="a" style="left:883.25px;top:135.95px;width:11.5px;height:11.6px;background:#F26D7D;"></div>
<div class="a" style="left:895.8px;top:135.95px;width:11.5px;height:11.6px;background:#ED1C24;"></div>
<div class="a" style="left:908.35px;top:135.95px;width:11.5px;height:11.6px;background:#F26522;"></div>
<div class="a" style="left:920.9px;top:135.95px;width:11.5px;height:11.6px;background:#F7941D;"></div>
<div class="a" style="left:933.45px;top:135.95px;width:11.5px;height:11.6px;background:#FFF200;"></div>
<div class="a" style="left:946.0px;top:135.95px;width:11.5px;height:11.6px;background:#8DC73F;"></div>
<div class="a" style="left:958.55px;top:135.95px;width:11.5px;height:11.6px;background:#39B54A;"></div>
<div class="a" style="left:971.1px;top:135.95px;width:11.5px;height:11.6px;background:#00A651;"></div>
<div class="a" style="left:983.65px;top:135.95px;width:11.5px;height:11.6px;background:#00A99D;"></div>
<div class="a" style="left:770.3px;top:148.5px;width:11.5px;height:11.6px;background:#0aaae6;"></div>
<div class="a" style="left:782.85px;top:148.5px;width:11.5px;height:11.6px;background:#1c75af;"></div>
<div class="a" style="left:795.4px;top:148.5px;width:11.5px;height:11.6px;background:#1c5e9e;"></div>
<div class="a" style="left:807.95px;top:148.5px;width:11.5px;height:11.6px;background:#40428e;"></div>
<div class="a" style="left:820.5px;top:148.5px;width:11.5px;height:11.6px;background:#6c3f8d;"></div>
<div class="a" style="left:833.05px;top:148.5px;width:11.5px;height:11.6px;background:#8e3b8c;"></div>
<div class="a" style="left:845.6px;top:148.5px;width:11.5px;height:11.6px;background:#d41c89;"></div>
<div class="a" style="left:858.15px;top:148.5px;width:11.5px;height:11.6px;background:#d52c63;"></div>
<div class="a" style="left:870.7px;top:148.5px;width:11.5px;height:11.6px;background:#972528;"></div>
<div class="a" style="left:883.25px;top:148.5px;width:11.5px;height:11.6px;background:#A0410D;"></div>
<div class="a" style="left:895.8px;top:148.5px;width:11.5px;height:11.6px;background:#A36209;"></div>
<div class="a" style="left:908.35px;top:148.5px;width:11.5px;height:11.6px;background:#ABA000;"></div>
<div class="a" style="left:920.9px;top:148.5px;width:11.5px;height:11.6px;background:#598527;"></div>
<div class="a" style="left:933.45px;top:148.5px;width:11.5px;height:11.6px;background:#197B30;"></div>
<div class="a" style="left:946.0px;top:148.5px;width:11.5px;height:11.6px;background:#007236;"></div>
<div class="a" style="left:958.55px;top:148.5px;width:11.5px;height:11.6px;background:#00746B;"></div>
<div class="a" style="left:971.1px;top:148.5px;width:11.5px;height:11.6px;background:#0076A3;"></div>
<div class="a" style="left:983.65px;top:148.5px;width:11.5px;height:11.6px;background:#004B80;"></div>
<div class="a" style="left:770.3px;top:161.05px;width:11.5px;height:11.6px;background:#1c4574;"></div>
<div class="a" style="left:782.85px;top:161.05px;width:11.5px;height:11.6px;background:#312c6a;"></div>
<div class="a" style="left:795.4px;top:161.05px;width:11.5px;height:11.6px;background:#512769;"></div>
<div class="a" style="left:807.95px;top:161.05px;width:11.5px;height:11.6px;background:#691f67;"></div>
<div class="a" style="left:820.5px;top:161.05px;width:11.5px;height:11.6px;background:#971c65;"></div>
<div class="a" style="left:833.05px;top:161.05px;width:11.5px;height:11.6px;background:#971c49;"></div>
<div class="a" style="left:845.6px;top:161.05px;width:11.5px;height:11.6px;background:#7b1c1c;"></div>
<div class="a" style="left:858.15px;top:161.05px;width:11.5px;height:11.6px;background:#7c401c;"></div>
<div class="a" style="left:870.7px;top:161.05px;width:11.5px;height:11.6px;background:#7e551c;"></div>
<div class="a" style="left:883.25px;top:161.05px;width:11.5px;height:11.6px;background:#827B00;"></div>
<div class="a" style="left:895.8px;top:161.05px;width:11.5px;height:11.6px;background:#406618;"></div>
<div class="a" style="left:908.35px;top:161.05px;width:11.5px;height:11.6px;background:#005E20;"></div>
<div class="a" style="left:920.9px;top:161.05px;width:11.5px;height:11.6px;background:#005826;"></div>
<div class="a" style="left:933.45px;top:161.05px;width:11.5px;height:11.6px;background:#005952;"></div>
<div class="a" style="left:946.0px;top:161.05px;width:11.5px;height:11.6px;background:#005B7F;"></div>
<div class="a" style="left:958.55px;top:161.05px;width:11.5px;height:11.6px;background:#003663;"></div>
<div class="a" style="left:971.1px;top:161.05px;width:11.5px;height:11.6px;background:#002157;"></div>
<div class="a" style="left:983.65px;top:161.05px;width:11.5px;height:11.6px;background:#0D004C;"></div>
<div class="a" style="left:1007px;top:99px;width:9px;height:70px;background:#4a4a4a;"></div>
<div class="a" style="left:1008px;top:110px;width:7px;height:36px;background:#6b6b6b;"></div>
<svg class="a" style="left:1008px;top:101px" width="7" height="5" viewBox="0 0 7 5"><path d="M1 4L3.5 1.5L6 4" fill="none" stroke="#8a8a8a" stroke-width="1"/></svg>
<svg class="a" style="left:1008px;top:163px" width="7" height="5" viewBox="0 0 7 5"><path d="M1 1L3.5 3.5L6 1" fill="none" stroke="#8a8a8a" stroke-width="1"/></svg>
<svg class="a" style="left:969px;top:176px" width="11" height="10" viewBox="0 0 11 10"><path d="M1 1.5H8.5V8.5H3.5L1 6Z" fill="none" stroke="#f0f0f0" stroke-width="1.3"/><path d="M1 6H3.5V8.5" fill="#f0f0f0" stroke="#f0f0f0" stroke-width="0.8"/></svg>
<svg class="a" style="left:989px;top:175px" width="10" height="11" viewBox="0 0 10 11"><path d="M1 2.5H9M3.5 2.5V1H6.5V2.5M2 2.5V10H8V2.5M4 4.5V8.5M6 4.5V8.5" fill="none" stroke="#9a9a9a" stroke-width="1"/></svg>
<div class="a" style="left:771px;top:190px;width:249px;height:2px;background:#3a3a3a;"></div>
<div class="a" style="left:771px;top:192px;width:249px;height:18.5px;background:#434343;"></div>
<div class="a" style="left:771px;top:192px;width:46px;height:18.5px;background:#4a4a4a;"></div>
<div class="a" style="left:817px;top:192px;width:54.5px;height:18.5px;background:#535353;"></div>
<div class="a" style="left:871.5px;top:192px;width:51px;height:18.5px;background:#4a4a4a;"></div>
<div class="t" style="left:776.51px;top:197.06px;font-size:8.2px;color:#a6a6a6;letter-spacing:-0.362px;transform:scaleX(0.8966);transform-origin:0 0;font-weight:700;-webkit-text-stroke-width:0">Обучение</div>
<div class="t" style="left:823.70px;top:197.06px;font-size:8.2px;color:#f2f2f2;letter-spacing:-0.325px;transform:scaleX(0.9027);transform-origin:0 0;font-weight:700;-webkit-text-stroke-width:0">Библиотеки</div>
<div class="t" style="left:877.50px;top:197.06px;font-size:8.2px;color:#a6a6a6;letter-spacing:-0.280px;transform:scaleX(0.9175);transform-origin:0 0;font-weight:700;-webkit-text-stroke-width:0">Коррекция</div>
<div class="a" style="left:1012px;top:197.5px;width:7.3px;height:5.5px;background:#8a8a8a"></div>
<div class="a" style="left:775.6px;top:217px;width:202px;height:12.7px;background:#4f4f4f;"></div>
<svg class="a" style="left:969px;top:221px" width="7" height="5" viewBox="0 0 7 5"><path d="M1 1.2L3.5 3.6L6 1.2" fill="none" stroke="#7a7a7a" stroke-width="1"/></svg>
<div class="a" style="left:985px;top:215px;width:14.5px;height:15.5px;background:#363636;"></div>
<div class="a" style="left:988px;top:218px;width:3.6px;height:3.6px;background:#f0f0f0;"></div>
<div class="a" style="left:992.6px;top:218px;width:3.6px;height:3.6px;background:#f0f0f0;"></div>
<div class="a" style="left:988px;top:222.6px;width:3.6px;height:3.6px;background:#f0f0f0;"></div>
<div class="a" style="left:992.6px;top:222.6px;width:3.6px;height:3.6px;background:#f0f0f0;"></div>
<svg class="a" style="left:1006px;top:217.5px" width="8.5" height="9.5" viewBox="0 0 8.5 9.5"><path d="M0 1H8.5M0 3.5H8.5M0 6H8.5M0 8.5H8.5" stroke="#e4e4e4" stroke-width="1.3"/></svg>
<svg class="a" style="left:775px;top:238.5px" width="9" height="9" viewBox="0 0 9 9"><circle cx="5.2" cy="3.8" r="2.8" fill="none" stroke="#e8e8e8" stroke-width="1.2"/><path d="M3.2 5.8L0.8 8.2" stroke="#e8e8e8" stroke-width="1.5"/></svg>
<div class="t" style="left:788.71px;top:239.06px;font-size:8.2px;color:#5f5f5f;letter-spacing:-0.278px;transform:scaleX(0.8964);transform-origin:0 0">Поиск в Adobe Stock</div>
<svg class="a" style="left:1009px;top:241.5px" width="7" height="5" viewBox="0 0 7 5"><path d="M1 1.2L3.5 3.6L6 1.2" fill="none" stroke="#6a6a6a" stroke-width="1"/></svg>
<div class="a" style="left:771px;top:254.5px;width:249px;height:1px;background:#4d4d4d;"></div>
<div class="a" style="left:771px;top:312px;width:249px;height:16.5px;background:#515151;"></div>
<div class="a" style="left:771px;top:312px;width:249px;height:1px;background:#585858;"></div>
<div class="t" style="left:979.69px;top:317.06px;font-size:8.2px;color:#e0e0e0;letter-spacing:-0.163px;transform:scaleX(0.9439);transform-origin:0 0;font-weight:700;-webkit-text-stroke-width:0">-- КБ</div>
<svg class="a" style="left:999px;top:317px" width="10" height="11" viewBox="0 0 10 11"><path d="M1 2.5H9M3.5 2.5V1H6.5V2.5M2 2.5V10H8V2.5M4 4.5V8.5M6 4.5V8.5" fill="none" stroke="#9a9a9a" stroke-width="1"/></svg>
<div class="a" style="left:771px;top:328.6px;width:249px;height:1.6px;background:#3a3a3a;"></div>
<div class="a" style="left:771px;top:330.2px;width:249px;height:19.3px;background:#434343;"></div>
<div class="a" style="left:771px;top:330.2px;width:30px;height:19.3px;background:#535353;"></div>
<div class="a" style="left:801px;top:330.2px;width:84.4px;height:19.3px;background:#4a4a4a;"></div>
<div class="t" style="left:776.51px;top:335.56px;font-size:8.2px;color:#f2f2f2;letter-spacing:-0.447px;transform:scaleX(0.8952);transform-origin:0 0;font-weight:700;-webkit-text-stroke-width:0">Слои</div>
<div class="t" style="left:807.31px;top:335.56px;font-size:8.2px;color:#a6a6a6;letter-spacing:-0.420px;transform:scaleX(0.8904);transform-origin:0 0;font-weight:700;-webkit-text-stroke-width:0">Каналы</div>
<div class="t" style="left:846.50px;top:335.56px;font-size:8.2px;color:#a6a6a6;letter-spacing:-0.328px;transform:scaleX(0.9110);transform-origin:0 0;font-weight:700;-webkit-text-stroke-width:0">Контуры</div>
<div class="a" style="left:1012px;top:336.5px;width:7.3px;height:5.5px;background:#8a8a8a"></div>
<div class="a" style="left:774.3px;top:357px;width:81px;height:11.5px;background:#4c4c4c;"></div>
<svg class="a" style="left:777px;top:358px" width="9" height="9" viewBox="0 0 9 9"><circle cx="3.6" cy="3.6" r="2.6" fill="none" stroke="#e6e6e6" stroke-width="1.3"/><path d="M5.5 5.5L8.3 8.3" stroke="#e6e6e6" stroke-width="1.6"/></svg>
<div class="t" style="left:787.71px;top:359.06px;font-size:8.2px;color:#6e6e6e;letter-spacing:-0.464px;transform:scaleX(0.8960);transform-origin:0 0">Вид</div>
<svg class="a" style="left:850px;top:361px" width="5" height="4" viewBox="0 0 5 4"><path d="M0.5 0.8L2.5 2.8L4.5 0.8" fill="none" stroke="#6a6a6a" stroke-width="0.8"/></svg>
<svg class="a" style="left:887.5px;top:358px" width="9" height="8.5" viewBox="0 0 9 8.5"><rect x="0.5" y="0.5" width="8" height="7.5" fill="none" stroke="#dedede" stroke-width="1.1"/><path d="M1.8 6.5L3.5 4.2L4.8 5.4L6 4L7.4 6.5Z" fill="#dedede"/></svg>
<svg class="a" style="left:904px;top:358px" width="8.5" height="8.5" viewBox="0 0 8.5 8.5"><circle cx="4.25" cy="4.25" r="3.6" fill="none" stroke="#dedede" stroke-width="1.1"/><path d="M1.7 6.8L6.8 1.7A3.6 3.6 0 0 1 1.7 6.8Z" fill="#dedede"/></svg>
<svg class="a" style="left:921px;top:358px" width="8" height="8.5" viewBox="0 0 8 8.5"><path d="M0.7 2.2V0.7H7.3V2.2M4 0.7V7.8M2.3 7.8H5.7" fill="none" stroke="#dedede" stroke-width="1.4"/></svg>
<svg class="a" style="left:937px;top:358px" width="8.5" height="8.5" viewBox="0 0 8.5 8.5"><rect x="1.8" y="1.8" width="4.9" height="4.9" fill="none" stroke="#dedede" stroke-width="1.1"/><rect x="0" y="0" width="2.6" height="2.6" fill="#dedede"/><rect x="5.9" y="0" width="2.6" height="2.6" fill="#dedede"/><rect x="0" y="5.9" width="2.6" height="2.6" fill="#dedede"/><rect x="5.9" y="5.9" width="2.6" height="2.6" fill="#dedede"/></svg>
<svg class="a" style="left:955px;top:357.5px" width="8" height="9" viewBox="0 0 8 9"><path d="M0.6 0.6H4.8L7.4 3.2V8.4H0.6Z" fill="none" stroke="#dedede" stroke-width="1.1"/><rect x="0.6" y="4.3" width="4" height="4.1" fill="#dedede"/></svg>
<div class="a" style="left:994.5px;top:361.5px;width:5px;height:5.5px;background:#3a3a3a;"></div>
<div class="a" style="left:993.3px;top:356px;width:6.4px;height:6.4px;border-radius:50%;background:#eeeeee"></div>
<div class="a" style="left:774.3px;top:376px;width:124px;height:11.4px;background:#4c4c4c;"></div>
<div class="t" style="left:777.71px;top:378.36px;font-size:8.2px;color:#7e7e7e;letter-spacing:-0.445px;transform:scaleX(0.8786);transform-origin:0 0">Обычные</div>
<div class="t" style="left:905.70px;top:378.36px;font-size:8.2px;color:#868686;letter-spacing:-0.281px;transform:scaleX(0.9015);transform-origin:0 0">Непрозрачность:</div>
<div class="a" style="left:962px;top:376px;width:22px;height:11.4px;background:#4c4c4c;"></div>
<div class="t" style="left:965.73px;top:378.57px;font-size:7.6px;color:#7a7a7a;letter-spacing:-0.398px;transform:scaleX(0.8994);transform-origin:0 0">100%</div>
<div class="a" style="left:988.5px;top:376px;width:10px;height:11.4px;background:#4c4c4c;"></div>
<div class="t" style="left:775.72px;top:397.36px;font-size:8.2px;color:#7e7e7e;letter-spacing:-0.400px;transform:scaleX(0.8555);transform-origin:0 0">Закрепить:</div>
<svg class="a" style="left:816px;top:396px" width="9" height="9" viewBox="0 0 9 9"><rect x="0.5" y="0.5" width="8" height="8" fill="none" stroke="#cfcfcf" stroke-width="1"/><rect x="1.5" y="1.5" width="2.5" height="2.5" fill="#cfcfcf"/><rect x="5" y="1.5" width="2.5" height="2.5" fill="#cfcfcf"/><rect x="1.5" y="5" width="2.5" height="2.5" fill="#cfcfcf"/><rect x="5" y="5" width="2.5" height="2.5" fill="#cfcfcf"/></svg>
<svg class="a" style="left:832px;top:396px" width="10" height="10" viewBox="0 0 10 10"><path d="M9.5 0.5L4.5 6" stroke="#cfcfcf" stroke-width="1.5"/><path d="M0.5 9.5C0.8 7.5 1.8 6.2 3.5 6.2L4.3 7C4.3 8.5 2.8 9.5 0.5 9.5Z" fill="#cfcfcf"/></svg>
<svg class="a" style="left:846.5px;top:396px" width="10" height="10" viewBox="0 0 10 10"><path d="M5 1V9M1 5H9" stroke="#cfcfcf" stroke-width="1"/><path d="M5 0L6.5 2H3.5ZM5 10L6.5 8H3.5ZM0 5L2 3.5V6.5ZM10 5L8 3.5V6.5Z" fill="#cfcfcf"/></svg>
<svg class="a" style="left:861.5px;top:396px" width="10" height="10" viewBox="0 0 10 10"><path d="M2.5 0.5V7.5H9.5M0.5 2.5H6.5C8 2.5 8.5 4 8.5 5.5V9.5" fill="none" stroke="#cfcfcf" stroke-width="1"/></svg>
<svg class="a" style="left:877.5px;top:396px" width="8.5" height="9.5" viewBox="0 0 8.5 9.5"><path d="M2 4.3V3C2 0.6 6.5 0.6 6.5 3V4.3" fill="none" stroke="#cfcfcf" stroke-width="1.2"/><rect x="0.5" y="4.3" width="7.5" height="5" fill="#cfcfcf"/><rect x="3.6" y="5.8" width="1.3" height="2" fill="#535353"/></svg>
<div class="t" style="left:931.70px;top:397.36px;font-size:8.2px;color:#868686;letter-spacing:-0.246px;transform:scaleX(0.9182);transform-origin:0 0">Заливка:</div>
<div class="a" style="left:962px;top:395px;width:22px;height:11.4px;background:#4c4c4c;"></div>
<div class="t" style="left:965.73px;top:397.57px;font-size:7.6px;color:#7a7a7a;letter-spacing:-0.398px;transform:scaleX(0.8994);transform-origin:0 0">100%</div>
<div class="a" style="left:988.5px;top:395px;width:10px;height:11.4px;background:#4c4c4c;"></div>
<div class="a" style="left:771px;top:410px;width:249px;height:1px;background:#474747;"></div>
<div class="a" style="left:771px;top:370.5px;width:241px;height:1px;background:#4b4b4b;"></div>
<div class="a" style="left:771px;top:389.7px;width:241px;height:1px;background:#4b4b4b;"></div>
<div class="a" style="left:1012px;top:411px;width:8px;height:124px;background:#4a4a4a;"></div>
<div class="a" style="left:771px;top:438.5px;width:241px;height:1px;background:#474747;"></div>
<div class="a" style="left:771px;top:468px;width:241px;height:1px;background:#474747;"></div>
<div class="a" style="left:771px;top:496.5px;width:241px;height:1px;background:#474747;"></div>
<div class="a" style="left:771px;top:524.5px;width:241px;height:1px;background:#474747;"></div>
<div class="a" style="left:791px;top:469px;width:221px;height:27.5px;background:#676767;"></div>
<div class="a" style="left:790px;top:411px;width:1px;height:113px;background:#4d4d4d;"></div>
<svg class="a" style="left:776px;top:423px" width="10" height="7" viewBox="0 0 10 7"><path d="M0.5 3.5C2.5 0.3 7.5 0.3 9.5 3.5C7.5 6.7 2.5 6.7 0.5 3.5Z" fill="#f0f0f0"/><circle cx="5" cy="3.5" r="1.5" fill="#535353"/></svg>
<div class="a" style="left:776.5px;top:450px;width:8.5px;height:8.5px;border:1px solid #5e5e5e"></div>
<div class="a" style="left:776.5px;top:478.7px;width:8.5px;height:8.5px;border:1px solid #5e5e5e"></div>
<div class="a" style="left:776.5px;top:507px;width:8.5px;height:8.5px;border:1px solid #5e5e5e"></div>
<div class="a" style="left:794px;top:415.7px;width:21.5px;height:21px;border:1px solid #222;background:repeating-conic-gradient(#e2e2e2 0 25%,#ffffff 0 50%) 0 0/3px 3px"></div>
<div class="t" style="left:822.21px;top:423.76px;font-size:8.2px;color:#e8e8e8;letter-spacing:-0.421px;transform:scaleX(0.8694);transform-origin:0 0">Слой 2</div>
<svg class="a" style="left:794px;top:443.6px" width="21.5" height="21" viewBox="0 0 21.5 21"><rect width="21.5" height="21" fill="#2d7c62"/><rect x="13" y="1" width="8" height="9" fill="#9cc8b0"/><rect x="0" y="17" width="21.5" height="4" fill="#c8d0cc"/><path d="M2.5 7.5C2.5 6.5 5.5 6.5 5.5 7.5L6 18H2.2Z" fill="#d8203a"/><path d="M5.5 5C5.5 3.8 9 3.8 9 5L9.5 17H5.5Z" fill="#1e2f78"/><path d="M10.5 7C11 6 13 6 13.5 7L16 20H8Z" fill="#f0eef4"/><path d="M14.5 5C14.5 4 18 4 18 5L18.5 18H14.5Z" fill="#223a70"/><circle cx="4" cy="5.5" r="1.1" fill="#e0b890"/><circle cx="7.3" cy="3" r="1.1" fill="#e0b890"/><circle cx="12" cy="5" r="1.1" fill="#e0b890"/><circle cx="16.3" cy="3" r="1.1" fill="#e0b890"/></svg>
<div class="a" style="left:794px;top:443.6px;width:21.5px;height:21px;border:1px solid #222"></div>
<div class="t" style="left:822.21px;top:450.56px;font-size:8.2px;color:#e8e8e8;letter-spacing:-0.421px;transform:scaleX(0.8694);transform-origin:0 0">Слой 4</div>
<svg class="a" style="left:793.5px;top:472.5px" width="22.5" height="22" viewBox="0 0 22.5 22"><rect width="22.5" height="22" fill="#dcdcdc"/><rect x="0" y="0" width="22.5" height="9" fill="#c4c6c8"/><path d="M2 3H8V6H2ZM11 2H20V5H11Z" fill="#a8aaac"/><path d="M0.5 22C1 16 3 12 6 11C8 10 10 11 12 12.5C14 14 14.5 17 14 22Z" fill="#2c3238"/><circle cx="8.5" cy="8.8" r="2.4" fill="#4a5056"/><path d="M12 9C14 8 16 9 16.5 12L17 22H13Z" fill="#646a70"/><path d="M16.5 10H22.5V22H17Z" fill="#f2f2f2"/><path d="M3 14L6 13L5 18Z" fill="#505a60"/></svg>
<svg class="a" style="left:792px;top:471px" width="26" height="25" viewBox="0 0 26 25"><path d="M0.6 5V0.6H5M21 0.6H25.4V5M25.4 20V24.4H21M5 24.4H0.6V20" fill="none" stroke="#e6e6e6" stroke-width="1.2"/></svg>
<div class="t" style="left:822.61px;top:479.86px;font-size:8.2px;color:#eeeeee;letter-spacing:-0.421px;transform:scaleX(0.8694);transform-origin:0 0">Слой 3</div>
<div class="a" style="left:793.2px;top:500.2px;width:22.5px;height:22.3px;background:#fff;border:1px solid #222"></div>
<div class="t" style="left:821.68px;top:507.56px;font-size:8.2px;color:#e8e8e8;letter-spacing:-0.117px;transform:scaleX(0.9763);transform-origin:0 0;font-style:italic">Фон</div>
<svg class="a" style="left:992px;top:506px" width="10" height="13" viewBox="0 0 10 13"><path d="M2.5 6V4C2.5 0.8 7.5 0.8 7.5 4V6" fill="none" stroke="#dcdcdc" stroke-width="1.3"/><rect x="1" y="6" width="8" height="6.5" fill="#dcdcdc"/><rect x="4.3" y="8" width="1.4" height="2.5" fill="#535353"/></svg>
<div class="a" style="left:771px;top:535px;width:249px;height:1px;background:#474747;"></div>
<svg class="a" style="left:880px;top:540px" width="126" height="11" viewBox="0 0 126 11"><g fill="none" stroke="#8a8a8a" stroke-width="1.1"><rect x="2.5" y="3" width="5" height="4" rx="2"/><rect x="7" y="3" width="5" height="4" rx="2"/></g><text x="22" y="8.8" font-family="Liberation Serif" font-style="italic" font-size="10" fill="#dcdcdc">fx</text><rect x="30.5" y="8.6" width="1.4" height="1.4" fill="#dcdcdc"/><rect x="40.2" y="1.5" width="9.5" height="7" fill="#dcdcdc"/><ellipse cx="45" cy="5" rx="2.4" ry="1.9" fill="#535353"/><circle cx="64.3" cy="5" r="3.8" fill="none" stroke="#dcdcdc" stroke-width="1.3"/><path d="M61.6 7.7L67 2.3A3.8 3.8 0 0 1 61.6 7.7Z" fill="#dcdcdc"/><rect x="68.5" y="8.6" width="1.4" height="1.4" fill="#dcdcdc"/><path d="M77.8 2H81.3L82.3 3.1H86.5V9H77.8Z" fill="#dcdcdc"/><path d="M98 1.8H104.6V8.8H100.3L98 6.5Z" fill="none" stroke="#dcdcdc" stroke-width="1.2"/><path d="M98 6.5H100.3V8.8" fill="#dcdcdc"/><path d="M116 2.3H124M118.5 2.3V1H121.5V2.3M117 2.3V9.8H123V2.3M119 4.3V8.3M121 4.3V8.3" fill="none" stroke="#dcdcdc" stroke-width="1"/></svg>
</body></html>
